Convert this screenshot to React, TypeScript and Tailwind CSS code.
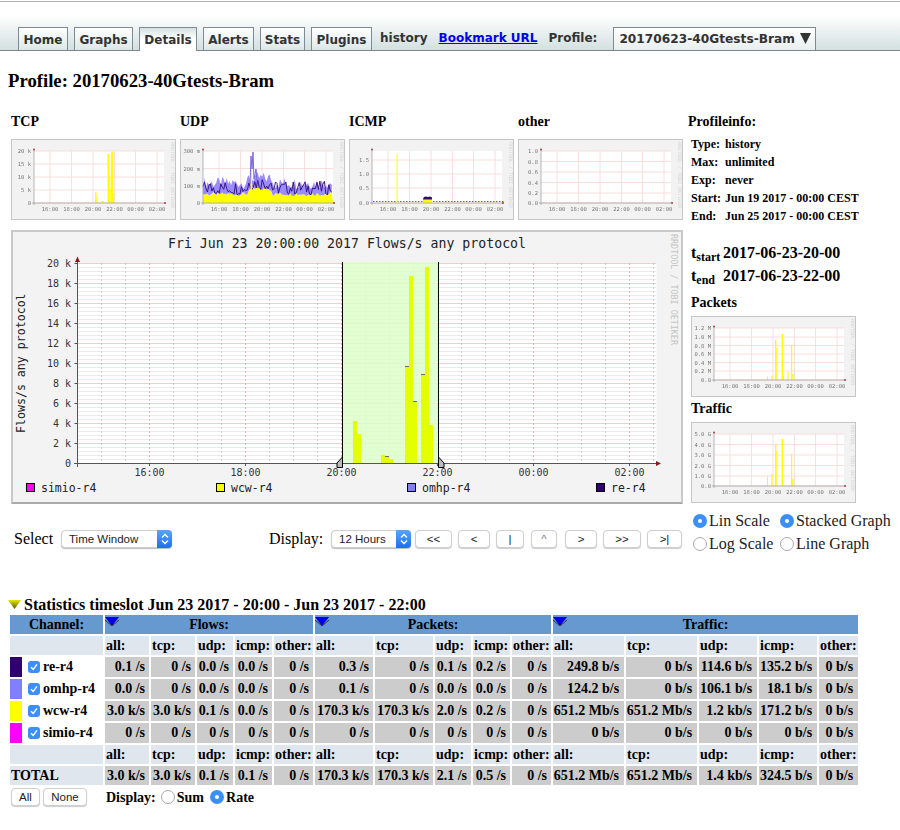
import React from "react";

const noise = (i: number) => {
  const v = Math.sin(i * 12.9898) * 43758.5453;
  return v - Math.floor(v);
};

const TIME_LABELS = [
  { x: 39, t: "16:00" },
  { x: 60.5, t: "18:00" },
  { x: 82, t: "20:00" },
  { x: 103.5, t: "22:00" },
  { x: 124.5, t: "00:00" },
  { x: 146, t: "02:00" },
];

type Bar = [number, number, number];

function Thumb({
  yLabels,
  bars = [],
  children,
}: {
  yLabels: [string, number][];
  bars?: Bar[];
  children?: React.ReactNode;
}) {
  return (
    <div className="w-[165px] h-[81px] border border-[#c6c6c6] bg-[#f2f2f2] shrink-0">
      <svg width="163" height="79" viewBox="1 1 163 79" className="blur-[0.45px] font-['DejaVu_Sans_Mono',monospace]">
        <rect x="23" y="12" width="130" height="52" fill="#fff" />
        {yLabels.map(([l, y]) => (
          <line key={l} x1="23" x2="153" y1={y} y2={y} stroke="#fad6d6" strokeWidth="0.8" />
        ))}
        {TIME_LABELS.map((l) => (
          <line key={l.t} x1={l.x} x2={l.x} y1="12" y2="64" stroke="#fad6d6" strokeWidth="0.8" />
        ))}
        {children}
        {bars.map(([x, y, w], i) => (
          <rect key={i} x={x} y={y} width={w} height={64 - y} fill="#ffff00" />
        ))}
        <line x1="21" x2="155" y1="64" y2="64" stroke="#999" strokeWidth="0.7" />
        <line x1="23" x2="23" y1="10" y2="66" stroke="#999" strokeWidth="0.7" />
        <circle cx="23" cy="10.5" r="0.9" fill="#a33" />
        <circle cx="154" cy="64" r="0.9" fill="#a33" />
        {yLabels.map(([l, y]) => (
          <text key={l} x="20" y={y + 2} textAnchor="end" fontSize="5.5" fill="#777">
            {l}
          </text>
        ))}
        {TIME_LABELS.map((l) => (
          <text key={l.t} x={l.x} y="71.5" textAnchor="middle" fontSize="5.5" fill="#777">
            {l.t}
          </text>
        ))}
        <text transform="translate(160 3) rotate(90)" fontSize="5" fill="#d6d6d6">
          RRDTOOL / TOBI OETIKER
        </text>
      </svg>
    </div>
  );
}

function UdpSeries() {
  const xs = Array.from({ length: 88 }, (_, i) => 23 + i * 1.48);
  const bump = (x: number) => (x > 68 && x < 92 ? 5 : 0);
  const yellow = xs.map((x, i) => [x, 57 - noise(i + 3) * 4 - bump(x)]);
  const top = xs.map((x, i) => [x, 50 - noise(i) * 12 - bump(x)]);
  const dark = xs.map((x, i) => [x, 56 - noise(i + 40) * 14 - bump(x)]);
  const pts = (a: number[][]) => a.map((p) => p.join(",")).join(" ");
  return (
    <>
      <polygon points={`23,64 ${pts(yellow)} 153,64`} fill="#ffff00" />
      <polygon points={`${pts(top)} ${pts([...yellow].reverse())}`} fill="#9a8cff" />
      <polyline points={pts(dark)} fill="none" stroke="#2e0a78" strokeWidth="0.9" />
      <rect x="70.5" y="31" width="1.5" height="33" fill="#ffff00" />
      <polyline points="70,45 71,17 72,30 73,13 74,40 76,30 77,42" fill="none" stroke="#7a66e0" strokeWidth="1" />
    </>
  );
}

function IcmpSeries() {
  const xs = Array.from({ length: 44 }, (_, i) => 24 + i * 3);
  return (
    <>
      {xs.map((x) => (
        <line key={x} x1={x} x2={x + 1.5} y1="62.5" y2="62.5" stroke="#6a5ce0" strokeWidth="1" />
      ))}
      <rect x="47.5" y="15" width="1.2" height="49" fill="#ffff3a" />
      <rect x="74" y="60" width="9" height="4" fill="#ffff00" />
      <polygon points="74,60 75,58 77,57.5 79,58 81,57.5 83,58.5 83,60.5 74,60.5" fill="#2e0a78" />
    </>
  );
}

const MAIN_BARS = [
  [353, 421],
  [357, 434],
  [381, 455],
  [385, 456],
  [389, 459],
  [405, 366],
  [409, 276],
  [413, 401],
  [421, 374],
  [425, 267],
  [429, 425],
];
const MAIN_TICKS = [
  [385, 456],
  [405, 366],
  [413, 401],
  [421, 374],
];

function MainGraph() {
  const hMinor = Array.from({ length: 51 }, (_, i) => i).filter((i) => i % 5 !== 0).map((i) => 463 - i * 4);
  const hMajor = Array.from({ length: 11 }, (_, i) => 463 - i * 20);
  const vMinor = Array.from({ length: 25 }, (_, i) => i).filter((i) => i % 4 !== 3).map((i) => 77.5 + i * 24);
  const vMajor = [149.5, 245.5, 341.5, 437.5, 533.5, 629.5];
  const xLabels = [
    [149.5, "16:00"],
    [245.5, "18:00"],
    [341.5, "20:00"],
    [437.5, "22:00"],
    [533.5, "00:00"],
    [629.5, "02:00"],
  ] as const;
  const legend = [
    { x: 27, c: "#ff00ff", t: "simio-r4" },
    { x: 217, c: "#ffff00", t: "wcw-r4" },
    { x: 408, c: "#8080ff", t: "omhp-r4" },
    { x: 597, c: "#300070", t: "re-r4" },
  ];
  return (
    <div className="w-[672px] h-[274px] border-2 border-[#c9c9c9] border-b-[#aaaaaa] bg-[#f3f3f3]">
      <svg width="668" height="270" viewBox="13 232 668 270" className="font-['DejaVu_Sans_Mono',monospace]">
        <rect x="77.5" y="263" width="579" height="200" fill="#fff" />
        {hMinor.map((y) => (
          <line key={y} x1="77.5" x2="656" y1={y + 0.5} y2={y + 0.5} stroke="#d4d4d4" strokeWidth="1" strokeDasharray="1 1" />
        ))}
        {vMinor.map((x) => (
          <line key={x} x1={x} x2={x} y1="263" y2="463" stroke="#cfcfcf" strokeWidth="1" strokeDasharray="2 2" />
        ))}
        {hMajor.map((y) => (
          <line key={y} x1="77.5" x2="656" y1={y + 0.5} y2={y + 0.5} stroke="#e49a9a" strokeWidth="1" strokeDasharray="1 1" />
        ))}
        {vMajor.map((x) => (
          <line key={x} x1={x} x2={x} y1="263" y2="463" stroke="#e8b4b4" strokeWidth="1" strokeDasharray="2 2" />
        ))}
        <rect x="342" y="262" width="96" height="201" fill="#dcffc8" fillOpacity="0.85" />
        {MAIN_BARS.map(([x, y]) => (
          <rect key={x} x={x} y={y} width="4" height={463 - y} fill="#e4ff00" />
        ))}
        {MAIN_TICKS.map(([x, y]) => (
          <rect key={x} x={x} y={y} width="4" height="1" fill="#666688" />
        ))}
        <line x1="342.5" x2="342.5" y1="262" y2="463" stroke="#000" />
        <line x1="438.5" x2="438.5" y1="262" y2="463" stroke="#000" />
        <line x1="74" x2="658" y1="463.5" y2="463.5" stroke="#555" />
        <line x1="77.5" x2="77.5" y1="260" y2="467" stroke="#555" />
        {hMajor.map((y) => (
          <line key={y} x1="74.5" x2="77" y1={y + 0.5} y2={y + 0.5} stroke="#555" />
        ))}
        {vMajor.map((x) => (
          <line key={x} x1={x} x2={x} y1="463" y2="466" stroke="#555" />
        ))}
        <polygon points="77.5,256.5 75,262 80,262" fill="#8a1a1a" />
        <polygon points="661,463.5 656,461 656,466" fill="#8a1a1a" />
        <polygon points="342.5,457 337,463 337,467.5 342.5,467.5" fill="#bbb" stroke="#000" />
        <polygon points="438.5,457 444,463 444,467.5 438.5,467.5" fill="#bbb" stroke="#000" />
        <text x="347" y="248" textAnchor="middle" fontSize="13.2" fill="#222" textLength="358">
          Fri Jun 23 20:00:00 2017 Flows/s any protocol
        </text>
        {hMajor.map((y, i) => (
          <text key={y} x="71" y={y + 4} textAnchor="end" fontSize="10" fill="#333">
            {i === 0 ? "0" : `${i * 2} k`}
          </text>
        ))}
        {xLabels.map(([x, t]) => (
          <text key={t} x={x} y="476" textAnchor="middle" fontSize="10" fill="#333">
            {t}
          </text>
        ))}
        <text transform="translate(25 433) rotate(-90)" fontSize="11.6" fill="#222">
          Flows/s any protocol
        </text>
        <text transform="translate(671 234) rotate(90)" fontSize="8.4" fill="#c4c4c4">
          RRDTOOL / TOBI OETIKER
        </text>
        {legend.map((l) => (
          <g key={l.t}>
            <rect x={l.x - 0.5} y="483.5" width="8" height="8" fill={l.c} stroke="#000" />
            <text x={l.x + 14} y="492" fontSize="11.5" fill="#222">
              {l.t}
            </text>
          </g>
        ))}
      </svg>
    </div>
  );
}

function Radio({ checked }: { checked?: boolean }) {
  return checked ? (
    <span className="flex items-center justify-center w-[14px] h-[14px] rounded-full bg-[#3d8ff8] shrink-0">
      <span className="w-[4px] h-[4px] rounded-full bg-white" />
    </span>
  ) : (
    <span className="block w-[14px] h-[14px] rounded-full border border-[#a9a9a9] bg-white shrink-0" />
  );
}

function MacSelect({ label, className }: { label: string; className: string }) {
  return (
    <div className={`flex items-stretch h-[18px] rounded-[4px] border border-[#cfcfcf] bg-white shadow-[0_1px_1px_#bbb] font-['Liberation_Sans',sans-serif] text-[11.5px] text-[#222] ${className}`}>
      <span className="flex-1 pl-[7px] leading-[16px]">{label}</span>
      <span className="w-[15px] -my-px -mr-px flex items-center justify-center rounded-r-[4px] bg-gradient-to-b from-[#5aa5fb] to-[#1d6ef0]">
        <svg width="8" height="12" viewBox="0 0 8 12" fill="none" stroke="#fff" strokeWidth="1.4">
          <path d="M1 4.5 4 1.5 7 4.5M1 7.5 4 10.5 7 7.5" />
        </svg>
      </span>
    </div>
  );
}

function NavButton({ label, className }: { label: string; className: string }) {
  return (
    <div className={`h-[18px] rounded-[4px] border border-[#cfcfcf] bg-white shadow-[0_1px_1px_#ccc] text-center font-['Liberation_Sans',sans-serif] text-[11.5px] leading-[16px] text-[#222] ${className}`}>
      {label}
    </div>
  );
}

const TABS = [
  { t: "Home", w: "w-[50px]", m: "ml-[18px]" },
  { t: "Graphs", w: "w-[59px]", m: "ml-[6px]" },
  { t: "Details", w: "w-[58px]", m: "ml-[6px]", active: true },
  { t: "Alerts", w: "w-[51px]", m: "ml-[6px]" },
  { t: "Stats", w: "w-[45px]", m: "ml-[6px]" },
  { t: "Plugins", w: "w-[61px]", m: "ml-[6px]" },
];

const SUB = ["all:", "tcp:", "udp:", "icmp:", "other:", "all:", "tcp:", "udp:", "icmp:", "other:", "all:", "tcp:", "udp:", "icmp:", "other:"];

const ROWS = [
  { name: "re-r4", color: "bg-[#300070]", v: ["0.1 /s", "0 /s", "0.0 /s", "0.0 /s", "0 /s", "0.3 /s", "0 /s", "0.1 /s", "0.2 /s", "0 /s", "249.8 b/s", "0 b/s", "114.6 b/s", "135.2 b/s", "0 b/s"] },
  { name: "omhp-r4", color: "bg-[#8080ff]", v: ["0.0 /s", "0 /s", "0.0 /s", "0.0 /s", "0 /s", "0.1 /s", "0 /s", "0.0 /s", "0.0 /s", "0 /s", "124.2 b/s", "0 b/s", "106.1 b/s", "18.1 b/s", "0 b/s"] },
  { name: "wcw-r4", color: "bg-[#ffff00]", v: ["3.0 k/s", "3.0 k/s", "0.1 /s", "0.0 /s", "0 /s", "170.3 k/s", "170.3 k/s", "2.0 /s", "0.2 /s", "0 /s", "651.2 Mb/s", "651.2 Mb/s", "1.2 kb/s", "171.2 b/s", "0 b/s"] },
  { name: "simio-r4", color: "bg-[#ff00ff]", v: ["0 /s", "0 /s", "0 /s", "0 /s", "0 /s", "0 /s", "0 /s", "0 /s", "0 /s", "0 /s", "0 b/s", "0 b/s", "0 b/s", "0 b/s", "0 b/s"] },
];
const TOTAL = ["3.0 k/s", "3.0 k/s", "0.1 /s", "0.1 /s", "0 /s", "170.3 k/s", "170.3 k/s", "2.1 /s", "0.5 /s", "0 /s", "651.2 Mb/s", "651.2 Mb/s", "1.4 kb/s", "324.5 b/s", "0 b/s"];

function BlueTriangle() {
  return (
    <svg width="14" height="9" viewBox="0 0 14 9" className="absolute left-0 top-[2px]">
      <polygon points="0,0 14,0 7,9" fill="#0000e0" />
      <polyline points="0,3 7,9 14,3" fill="none" stroke="#333" strokeWidth="1" />
    </svg>
  );
}

function SubHeaderRow() {
  return (
    <tr className="h-[19px]">
      <td className="bg-[#dfe6ed]" />
      {SUB.map((s, i) => (
        <td key={i} className="bg-[#dfe6ed] pl-[1px] text-left">
          {s}
        </td>
      ))}
    </tr>
  );
}

export default function App() {
  return (
    <div className="w-[900px] h-[830px] overflow-hidden bg-white text-black font-['Liberation_Serif',serif]">
      <div className="mt-px border-t border-[#b0b0b0]" />
      <div className="mt-[13px] h-[36px] flex items-end border-b border-[#80868c] bg-gradient-to-b from-white to-[#d3e0e0] font-['DejaVu_Sans',sans-serif] font-bold text-[12px] text-[#333]">
        {TABS.map((tab) => (
          <div
            key={tab.t}
            className={`${tab.w} ${tab.m} h-[23px] border border-b-0 border-[#7f8a96] text-center leading-[24px] ${tab.active ? "bg-gradient-to-b from-[#d5e2e2] via-white to-white -mb-px h-[24px]" : "bg-gradient-to-b from-white to-[#dde7e7]"}`}
          >
            {tab.t}
          </div>
        ))}
        <span className="ml-[8px] mb-[2px] leading-[20px]">history</span>
        <a className="ml-[11px] mb-[2px] leading-[20px] text-[#0000ee] underline">Bookmark URL</a>
        <span className="ml-[11px] mb-[2px] leading-[20px]">Profile:</span>
        <div className="ml-[16px] w-[203px] h-[23px] flex items-center border border-b-0 border-[#808890] bg-gradient-to-b from-white to-[#e8eeee] pl-[5px] text-[12.2px] whitespace-nowrap">
          20170623-40Gtests-Bram
          <svg width="11" height="11" viewBox="0 0 11 11" className="ml-[5px] mb-[2px] shrink-0">
            <polygon points="0,0 11,0 5.5,11" fill="#333" />
          </svg>
        </div>
      </div>

      <h1 className="mt-[20px] ml-[8px] text-[18.72px] leading-[20px] font-bold">Profile: 20170623-40Gtests-Bram</h1>

      <div className="mt-[23px] flex">
        <div className="ml-[11px] w-[672px] shrink-0">
          <div className="grid grid-cols-[169px_169px_169px_165px] text-[14px] font-bold leading-[16px]">
            <span>TCP</span>
            <span>UDP</span>
            <span>ICMP</span>
            <span>other</span>
          </div>
          <div className="mt-[9px] grid grid-cols-[169px_169px_169px_165px]">
            <Thumb
              yLabels={[["20 k", 12], ["15 k", 25], ["10 k", 38], ["5 k", 51], ["0", 64]]}
              bars={[[84, 53.5, 1.6], [85.6, 57, 1], [90.5, 62, 2], [96.5, 15, 1.8], [98.3, 37, 1], [99.3, 50, 1], [100, 12.5, 2], [102, 54, 1.2]]}
            />
            <Thumb yLabels={[["300 m", 12], ["200 m", 29.5], ["100 m", 47], ["0", 64]]}>
              <UdpSeries />
            </Thumb>
            <Thumb yLabels={[["1.5", 21], ["1.0", 35], ["0.5", 49], ["0.0", 64]]}>
              <IcmpSeries />
            </Thumb>
            <Thumb yLabels={[["1.0", 12], ["0.8", 22.5], ["0.6", 33], ["0.4", 43.5], ["0.2", 54], ["0.0", 64]]} />
          </div>
          <div className="mt-[10px]">
            <MainGraph />
          </div>
          <div className="mt-[26px] flex items-center h-[18px] text-[16px]">
            <span className="ml-[3px] w-[47px]">Select</span>
            <MacSelect label="Time Window" className="w-[111px]" />
            <span className="ml-[97px] w-[62px]">Display:</span>
            <MacSelect label="12 Hours" className="w-[80px]" />
            <NavButton label="<<" className="ml-[4px] w-[37px]" />
            <NavButton label="<" className="ml-[6px] w-[32px]" />
            <NavButton label="|" className="ml-[6px] w-[28px] text-[#2a7ae8]" />
            <NavButton label="^" className="ml-[7px] w-[26px] text-[#777]" />
            <NavButton label=">" className="ml-[8px] w-[32px]" />
            <NavButton label=">>" className="ml-[6px] w-[38px]" />
            <NavButton label=">|" className="ml-[6px] w-[35px]" />
          </div>
        </div>

        <div className="ml-[5px] flex-1">
          <div className="text-[14px] font-bold leading-[16px]">Profileinfo:</div>
          <div className="mt-[5px] ml-[3px] text-[12px] font-bold leading-[18px] whitespace-nowrap">
            {[
              ["Type:", "history"],
              ["Max:", "unlimited"],
              ["Exp:", "never"],
              ["Start:", "Jun 19 2017 - 00:00 CEST"],
              ["End:", "Jun 25 2017 - 00:00 CEST"],
            ].map(([k, v]) => (
              <div key={k} className="flex">
                <span className="w-[34px]">{k}</span>
                <span>{v}</span>
              </div>
            ))}
          </div>
          <div className="mt-[16px] ml-[3px] text-[16px] font-bold leading-[23px] whitespace-nowrap">
            <div className="flex h-[23px]">
              <span className="w-[32px]">
                t<sub className="text-[12px] leading-none">start</sub>
              </span>
              <span>2017-06-23-20-00</span>
            </div>
            <div className="flex h-[23px]">
              <span className="w-[32px]">
                t<sub className="text-[12px] leading-none">end</sub>
              </span>
              <span>2017-06-23-22-00</span>
            </div>
          </div>
          <div className="ml-[3px]">
            <div className="mt-[8px] text-[14px] font-bold leading-[16px]">Packets</div>
            <div className="mt-[5px]">
              <Thumb
                yLabels={[["1.2 M", 12], ["1.0 M", 21], ["0.8 M", 29.5], ["0.6 M", 38], ["0.4 M", 46.5], ["0.2 M", 55], ["0.0", 64]]}
                bars={[[76, 60.5, 1], [80.3, 59.5, 1.2], [84, 24, 1.4], [85.4, 32, 1], [90.6, 18, 1.6], [92, 60, 1], [96.3, 56, 1.2], [100, 29, 1.2], [101.2, 58, 1.4]]}
              />
            </div>
            <div className="mt-[4px] text-[14px] font-bold leading-[16px]">Traffic</div>
            <div className="mt-[5px]">
              <Thumb
                yLabels={[["5.0 G", 12], ["4.0 G", 22.5], ["3.0 G", 33], ["2.0 G", 43.5], ["1.0 G", 54], ["0.0", 64]]}
                bars={[[76, 54.5, 1], [80.3, 52, 1.2], [84, 22, 1.4], [85.4, 29, 1], [90.6, 17, 1.6], [100, 32, 1.2], [101.2, 57, 1.4]]}
              />
            </div>
          </div>
          <div className="mt-[9px] ml-[5px] grid grid-cols-[87px_auto] gap-y-[5px] text-[16px] leading-[18px] text-[#222] whitespace-nowrap">
            <div className="flex items-center gap-[2px]">
              <Radio checked />
              Lin Scale
            </div>
            <div className="flex items-center gap-[2px]">
              <Radio checked />
              Stacked Graph
            </div>
            <div className="flex items-center gap-[2px]">
              <Radio />
              Log Scale
            </div>
            <div className="flex items-center gap-[2px]">
              <Radio />
              Line Graph
            </div>
          </div>
        </div>
      </div>

      <div className="mt-[43px] ml-[8px] flex items-center h-[17px] gap-[3px] text-[16px] font-bold whitespace-nowrap">
        <svg width="13" height="9" viewBox="0 0 13 9">
          <defs>
            <linearGradient id="olive" x1="0" y1="0" x2="0" y2="1">
              <stop offset="0" stopColor="#e8e800" />
              <stop offset="1" stopColor="#555500" />
            </linearGradient>
          </defs>
          <polygon points="0,0 13,0 6.5,9" fill="url(#olive)" />
        </svg>
        Statistics timeslot Jun 23 2017 - 20:00 - Jun 23 2017 - 22:00
      </div>

      <table className="ml-[8px] w-[852px] table-fixed border-separate border-spacing-[2px] text-[14px] font-bold leading-none">
        <colgroup>
          {[
            "w-[93px]",
            "w-[44px]", "w-[44px]", "w-[36px]", "w-[37px]", "w-[39px]",
            "w-[58px]", "w-[58px]", "w-[36px]", "w-[37px]", "w-[39px]",
            "w-[71px]", "w-[71px]", "w-[58px]", "w-[58px]", "w-[39px]",
          ].map((w, i) => (
            <col key={i} className={w} />
          ))}
        </colgroup>
        <tbody>
          <tr className="h-[19px] bg-transparent">
            <td className="bg-[#6699d0] text-center p-0">Channel:</td>
            {["Flows:", "Packets:", "Traffic:"].map((h) => (
              <td key={h} colSpan={5} className="relative bg-[#6699d0] text-center p-0">
                <BlueTriangle />
                {h}
              </td>
            ))}
          </tr>
          <SubHeaderRow />
          {ROWS.map((r) => (
            <tr key={r.name} className="h-[20px]">
              <td className="p-0">
                <div className="flex items-center h-[20px]">
                  <span className={`w-[12px] h-[20px] ${r.color}`} />
                  <span className="ml-[6px] w-[12px] h-[12px] rounded-[3px] bg-[#3d8ff8] flex items-center justify-center">
                    <svg width="8" height="8" viewBox="0 0 8 8" fill="none" stroke="#fff" strokeWidth="1.4">
                      <path d="M1 4.2 3.2 6.4 7 1.4" />
                    </svg>
                  </span>
                  <span className="ml-[3px]">{r.name}</span>
                </div>
              </td>
              {r.v.map((v, i) => (
                <td key={i} className={`bg-[#cccccc] text-right whitespace-nowrap p-0 ${i > 9 ? "pr-[5px]" : "pr-[4px]"}`}>
                  {v}
                </td>
              ))}
            </tr>
          ))}
          <SubHeaderRow />
          <tr className="h-[19px]">
            <td className="bg-[#dfe6ed] pl-[1px]">TOTAL</td>
            {TOTAL.map((v, i) => (
              <td key={i} className={`bg-[#cccccc] text-right whitespace-nowrap p-0 ${i > 9 ? "pr-[5px]" : "pr-[4px]"}`}>
                {v}
              </td>
            ))}
          </tr>
        </tbody>
      </table>

      <div className="mt-px flex items-center h-[18px] text-[14px] font-bold">
        <NavButton label="All" className="ml-[11px] w-[29px] font-normal" />
        <NavButton label="None" className="ml-[3px] w-[44px] font-normal" />
        <span className="ml-[19px]">Display:</span>
        <span className="ml-[5px]">
          <Radio />
        </span>
        <span className="ml-[2px]">Sum</span>
        <span className="ml-[6px]">
          <Radio checked />
        </span>
        <span className="ml-[2px]">Rate</span>
      </div>
    </div>
  );
}
